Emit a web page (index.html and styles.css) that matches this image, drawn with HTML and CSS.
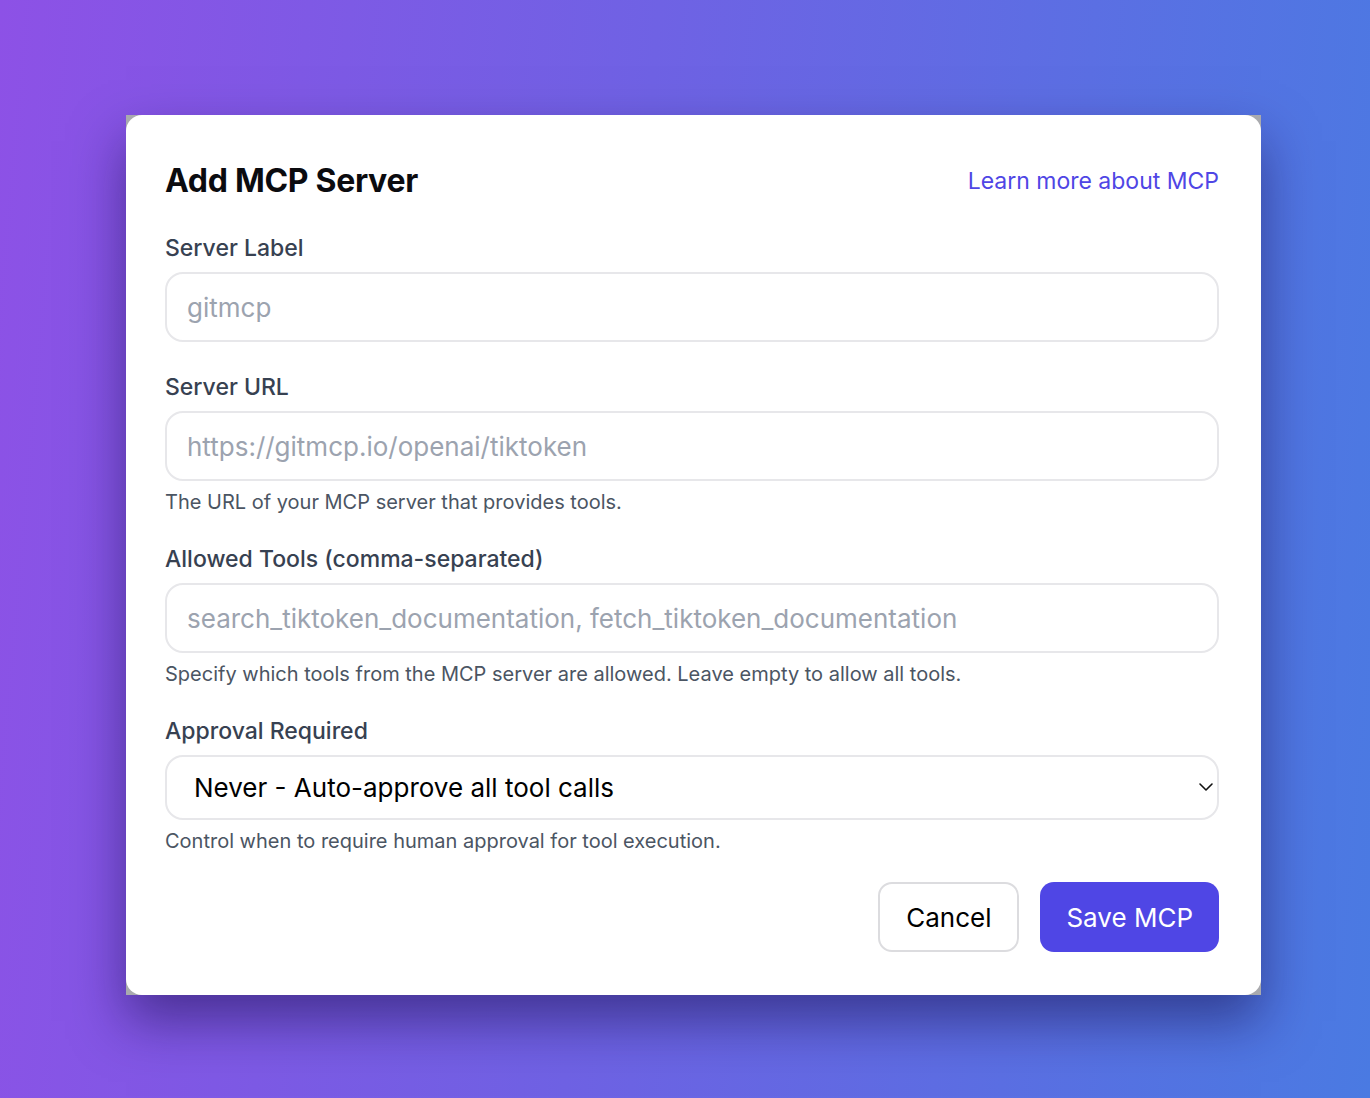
FILE: index.html
```html
<!DOCTYPE html>
<html>
<head>
    <title>Add MCP Server</title>
    <link rel="stylesheet" href="styles.css">
</head>
<body>
    <div class="frame">
        <form class="modal">
            <div class="modal-header">
                <h1>Add MCP Server</h1>
                <a href="#" class="learn-link">Learn more about MCP</a>
            </div>

            <div class="field">
                <label for="label">Server Label</label>
                <input type="text" id="label" placeholder="gitmcp">
            </div>

            <div class="field">
                <label for="url">Server URL</label>
                <input type="text" id="url" placeholder="https://gitmcp.io/openai/tiktoken">
                <p class="help">The URL of your MCP server that provides tools.</p>
            </div>

            <div class="field">
                <label for="tools">Allowed Tools (comma-separated)</label>
                <input type="text" id="tools" placeholder="search_tiktoken_documentation, fetch_tiktoken_documentation">
                <p class="help">Specify which tools from the MCP server are allowed. Leave empty to allow all tools.</p>
            </div>

            <div class="field">
                <label for="approval">Approval Required</label>
                <div class="select-wrap">
                    <select id="approval">
                        <option>Never - Auto-approve all tool calls</option>
                        <option>Always - Ask before every tool call</option>
                    </select>
                    <svg class="chevron" width="16" height="16" viewBox="0 0 16 16">
                        <path d="M2 5l6 6 6-6" fill="none" stroke="#111" stroke-width="1.6" stroke-linecap="round" stroke-linejoin="round"/>
                    </svg>
                </div>
                <p class="help">Control when to require human approval for tool execution.</p>
            </div>

            <div class="actions">
                <button type="button" class="button button-secondary">Cancel</button>
                <button type="submit" class="button button-primary">Save MCP</button>
            </div>
        </form>
    </div>
</body>
</html>
```

FILE: styles.css
```css
body {
    font-family: Inter, "Noto Sans", sans-serif;
    margin: 0;
    min-height: 1098px;
    background: linear-gradient(95deg, #8d51e6 0%, #6f62e4 45%, #4a7ae2 100%);
    padding: 115px 109px 103px 126px;
    box-sizing: border-box;
}
.frame {
    background: #a9aaae;
    box-shadow: 0 26px 50px rgba(20, 10, 70, 0.5);
}
.modal {
    background: #ffffff;
    border-radius: 16px;
    padding: 44px 42px 43px 39px;
    display: flex;
    flex-direction: column;
}
.modal-header {
    display: flex;
    justify-content: space-between;
    align-items: center;
    margin-bottom: 31px;
}
.modal-header h1 {
    margin: 0;
    font-size: 32px;
    line-height: 44px;
    font-weight: 700;
    color: #0b0b0f;
    letter-spacing: -0.3px;
}
.learn-link {
    color: #4f46e5;
    text-decoration: none;
    font-size: 23px;
}
.field {
    display: flex;
    flex-direction: column;
    margin-bottom: 31px;
}
.field label {
    font-size: 23px;
    line-height: 28px;
    font-weight: 500;
    color: #374151;
    margin-bottom: 10px;
}
.field input,
.field select {
    height: 70px;
    box-sizing: border-box;
    border: 2px solid #e7e7ea;
    border-radius: 18px;
    padding: 0 20px;
    font-family: inherit;
    font-size: 26px;
    color: #111;
    background: #fff;
    outline: none;
}
.field input::placeholder {
    color: #9ca3af;
}
.select-wrap {
    position: relative;
}
.field select {
    width: 100%;
    height: 65px;
    appearance: none;
    padding-left: 27px;
    color: #000;
}
.chevron {
    position: absolute;
    right: 5px;
    top: 24px;
}
.help {
    margin: 10px 0 1px;
    font-size: 20px;
    line-height: 22px;
    color: #4b5563;
}
.actions {
    display: flex;
    justify-content: flex-end;
    gap: 21px;
    margin-top: -2px;
}
.button {
    height: 70px;
    border-radius: 14px;
    font-family: inherit;
    font-size: 26px;
    padding: 0 26px;
    cursor: pointer;
}
.button-secondary {
    background: #fff;
    border: 2px solid #dcdcdf;
    color: #000;
}
.button-primary {
    background: #4f46e5;
    border: 0;
    color: #fff;
}
```
